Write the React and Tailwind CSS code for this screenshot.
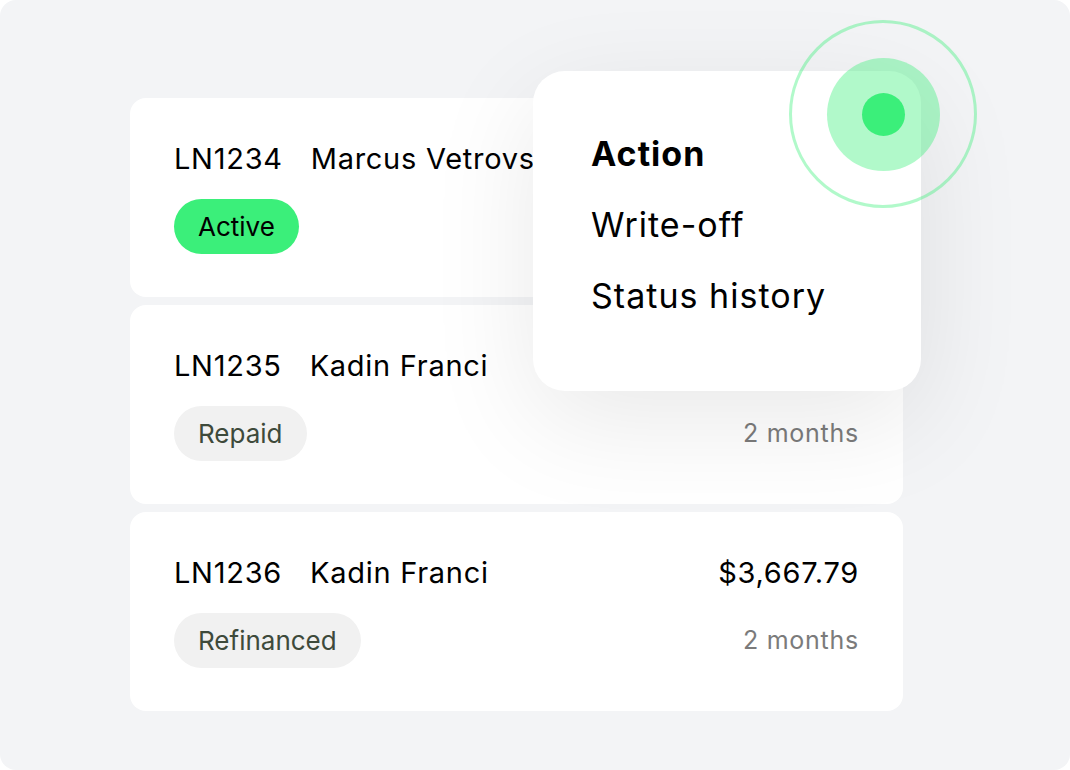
import React from 'react';

const loans = [
  { id: 'LN1234', name: 'Marcus Vetrovs', amount: '$1,240.00', status: 'Active', age: '1 month' },
  { id: 'LN1235', name: 'Kadin Franci', amount: '$2,310.50', status: 'Repaid', age: '2 months' },
  { id: 'LN1236', name: 'Kadin Franci', amount: '$3,667.79', status: 'Refinanced', age: '2 months' },
];

const StatusPill = ({ status }) => {
  const active = status === 'Active';
  return (
    <span
      className={`inline-flex h-[55px] items-center rounded-full px-6 text-[26px] ${
        active ? 'bg-[#3bef7a] text-black' : 'bg-[#f1f1f1] text-[#3e4a3b]'
      }`}
    >
      {status}
    </span>
  );
};

const LoanCard = ({ loan }) => (
  <div className="flex h-[199px] flex-col justify-between rounded-2xl bg-white px-11 pt-[45px] pb-[43px]">
    <div className="flex items-center justify-between text-[29px] leading-8 tracking-[0.025em] text-black">
      <div className="flex gap-7">
        <span>{loan.id}</span>
        <span>{loan.name}</span>
      </div>
      <span>{loan.amount}</span>
    </div>
    <div className="flex items-center justify-between">
      <StatusPill status={loan.status} />
      <span className="text-[25px] tracking-[0.03em] text-[#7b7b7b]">{loan.age}</span>
    </div>
  </div>
);

export default function App() {
  return (
    <div className="min-h-screen bg-white" style={{ fontFamily: 'Inter, "Noto Sans", sans-serif' }}>
      <div className="relative h-[770px] w-[1070px] overflow-hidden rounded-2xl bg-[#f3f4f6]">
        <div className="flex w-[903px] flex-col gap-2 pt-[98px] pl-[130px]">
          {loans.map((loan) => (
            <LoanCard key={loan.id} loan={loan} />
          ))}
        </div>

        {/* action menu */}
        <div className="absolute left-[533px] top-[71px] flex h-[320px] w-[388px] flex-col gap-[37px] rounded-[32px] bg-white pl-[58px] pt-[66px] text-[34px] leading-[34px] tracking-[0.03em] text-black shadow-[0_30px_110px_rgba(0,0,0,0.09)]">
          <span className="font-bold">Action</span>
          <span>Write-off</span>
          <span>Status history</span>
        </div>

        {/* pulse marker */}
        <div className="absolute left-[789px] top-[20px] flex h-[188px] w-[188px] items-center justify-center rounded-full border-[3px] border-[#3bef7a]/40">
          <div className="flex h-[113px] w-[113px] items-center justify-center rounded-full bg-[#3bef7a]/40">
            <div className="h-[43px] w-[43px] rounded-full bg-[#3bef7a]" />
          </div>
        </div>
      </div>
    </div>
  );
}
